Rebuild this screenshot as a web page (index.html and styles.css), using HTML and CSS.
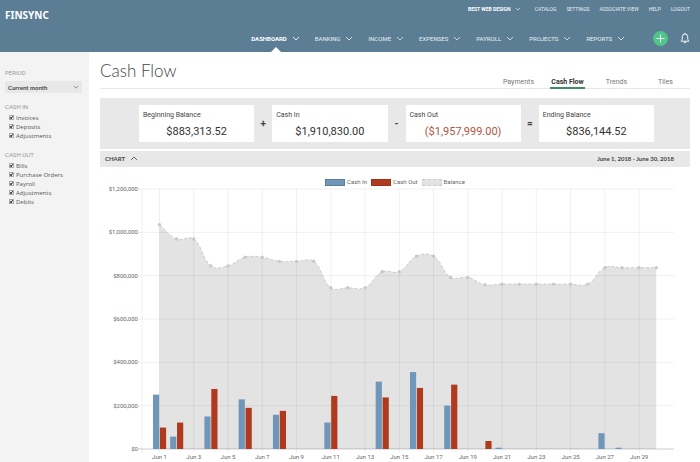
FILE: index.html
```html
<!DOCTYPE html>
<html lang="en">
<head>
    <meta charset="UTF-8">
    <meta name="viewport" content="width=device-width, initial-scale=1.0">
    <title>Cash Flow - FINSYNC</title>
    <link rel="stylesheet" href="styles.css">
</head>
<body>
    <header class="header">
        <a class="logo" href="#">FINSYNC</a>
        <div class="menus">
            <nav class="top-nav">
                <a class="company" href="#">BEST WEB DESIGN <svg class="chevron small" viewBox="0 0 8 5"><path d="M1 1l3 3 3-3"/></svg></a>
                <a href="#">CATALOG</a>
                <a href="#">SETTINGS</a>
                <a href="#">ASSOCIATE VIEW</a>
                <a href="#">HELP</a>
                <a href="#">LOGOUT</a>
            </nav>
            <nav class="main-nav">
                <a class="active" href="#">DASHBOARD <svg class="chevron" viewBox="0 0 8 5"><path d="M1 1l3 3 3-3"/></svg></a>
                <a href="#">BANKING <svg class="chevron" viewBox="0 0 8 5"><path d="M1 1l3 3 3-3"/></svg></a>
                <a href="#">INCOME <svg class="chevron" viewBox="0 0 8 5"><path d="M1 1l3 3 3-3"/></svg></a>
                <a href="#">EXPENSES <svg class="chevron" viewBox="0 0 8 5"><path d="M1 1l3 3 3-3"/></svg></a>
                <a href="#">PAYROLL <svg class="chevron" viewBox="0 0 8 5"><path d="M1 1l3 3 3-3"/></svg></a>
                <a href="#">PROJECTS <svg class="chevron" viewBox="0 0 8 5"><path d="M1 1l3 3 3-3"/></svg></a>
                <a href="#">REPORTS <svg class="chevron" viewBox="0 0 8 5"><path d="M1 1l3 3 3-3"/></svg></a>
                <button class="add-btn" aria-label="Add">
                    <svg viewBox="0 0 15 15"><path d="M7.5 3.5v8M3.5 7.5h8"/></svg>
                </button>
                <button class="bell-btn" aria-label="Notifications">
                    <svg viewBox="0 0 10 12"><path d="M1 9.200h8c-1-1-1.300-1.800-1.300-3.200V4.700a2.700 2.700 0 0 0-5.400 0V6c0 1.400-.3 2.200-1.300 3.200zM5 2V.8M3.900 9.500a1.100 1.300 0 0 0 2.200 0"/></svg>
                </button>
            </nav>
        </div>
    </header>

    <div class="page">
        <aside class="sidebar">
            <label class="group-title" for="period">PERIOD</label>
            <div class="select-box">
                <select id="period">
                    <option>Current month</option>
                </select>
                <svg class="chevron small" viewBox="0 0 8 5"><path d="M1 1l3 3 3-3"/></svg>
            </div>
            <fieldset>
                <legend class="group-title">CASH IN</legend>
                <label><input type="checkbox" checked> Invoices</label>
                <label><input type="checkbox" checked> Deposits</label>
                <label><input type="checkbox" checked> Adjustments</label>
            </fieldset>
            <fieldset>
                <legend class="group-title">CASH OUT</legend>
                <label><input type="checkbox" checked> Bills</label>
                <label><input type="checkbox" checked> Purchase Orders</label>
                <label><input type="checkbox" checked> Payroll</label>
                <label><input type="checkbox" checked> Adjustments</label>
                <label><input type="checkbox" checked> Debits</label>
            </fieldset>
        </aside>

        <main class="content">
            <div class="title-row">
                <h1>Cash Flow</h1>
                <nav class="tabs">
                    <a href="#">Payments</a>
                    <a class="active" href="#">Cash Flow</a>
                    <a href="#">Trends</a>
                    <a href="#">Tiles</a>
                </nav>
            </div>

            <section class="summary">
                <div class="card">
                    <h2>Beginning Balance</h2>
                    <p>$883,313.52</p>
                </div>
                <span class="operator">+</span>
                <div class="card">
                    <h2>Cash In</h2>
                    <p>$1,910,830.00</p>
                </div>
                <span class="operator">-</span>
                <div class="card">
                    <h2>Cash Out</h2>
                    <p class="negative">($1,957,999.00)</p>
                </div>
                <span class="operator">=</span>
                <div class="card">
                    <h2>Ending Balance</h2>
                    <p>$836,144.52</p>
                </div>
            </section>

            <div class="chart-bar">
                <button class="chart-toggle">CHART <svg class="chevron" viewBox="0 0 8 5"><path d="M1 4l3-3 3 3"/></svg></button>
                <span>June 1, 2018 - June 30, 2018</span>
            </div>

            <ul class="chart-legend">
                <li><span class="swatch in"></span>Cash In</li>
                <li><span class="swatch out"></span>Cash Out</li>
                <li><span class="swatch balance"></span>Balance</li>
            </ul>
            <svg id="chart" class="chart" viewBox="0 0 590 275"></svg>
        </main>
    </div>
    <script src="script.js"></script>
</body>
</html>
```
FILE: styles.css
```css
* {
    box-sizing: border-box;
}

body {
    margin: 0;
    min-height: 100vh;
    display: flex;
    flex-direction: column;
    font-family: Lato, "Open Sans", sans-serif;
    font-size: 6px;
    color: #444;
    background-color: #fff;
}

a {
    color: inherit;
    text-decoration: none;
}

button {
    padding: 0;
    border: none;
    background: none;
    font: inherit;
    color: inherit;
    cursor: pointer;
}

.chevron {
    width: 8px;
    height: 5px;
    fill: none;
    stroke: currentColor;
    stroke-width: 0.8;
}

.chevron.small {
    width: 6px;
    height: 4px;
}

/* header */
.header {
    display: flex;
    justify-content: space-between;
    height: 52px;
    padding: 0 10px 0 5px;
    background-color: #5c7e95;
    font-family: Roboto, sans-serif;
    color: #e8eef2;
}

.logo {
    padding-top: 8px;
    font: bold 10px/15px "Noto Sans", sans-serif;
    color: #fff;
}

.menus {
    display: flex;
    flex-direction: column;
    align-items: flex-end;
}

.top-nav {
    display: flex;
    align-items: center;
    gap: 10px;
    height: 17px;
    font-size: 5px;
}

.company {
    font-weight: bold;
    color: #fff;
    margin-right: 4px;
}

.company .chevron {
    margin-left: 3px;
}

.main-nav {
    display: flex;
    align-items: center;
    gap: 15px;
    height: 35px;
    padding-top: 7px;
}

.main-nav a {
    position: relative;
    display: flex;
    align-items: center;
    gap: 5px;
    height: 28px;
}

.main-nav .active {
    font-weight: bold;
    color: #fff;
}

.main-nav .active::after {
    content: "";
    position: absolute;
    left: 50%;
    bottom: 0;
    transform: translateX(-50%);
    border: 5px solid transparent;
    border-top: none;
    border-bottom-color: #fff;
}

.add-btn {
    width: 15px;
    height: 15px;
    margin: 0 -3px 0 13px;
    border-radius: 50%;
    background-color: #4fc58a;
}

.add-btn svg,
.bell-btn svg {
    display: block;
    width: 100%;
    fill: none;
    stroke: #fff;
    stroke-width: 0.9;
}

.bell-btn {
    width: 10px;
}

/* sidebar */
.page {
    flex: 1;
    display: flex;
}

.sidebar {
    width: 89px;
    padding: 17px 7px 0 5px;
    background-color: #f3f3f3;
    font-family: "Open Sans", sans-serif;
    color: #555;
}

.group-title {
    display: block;
    padding: 0;
    font-family: Roboto, sans-serif;
    line-height: 8px;
    color: #999;
}

.select-box {
    position: relative;
    margin: 4px 0 10px;
}

.select-box select {
    appearance: none;
    display: block;
    width: 100%;
    height: 12px;
    padding: 0 3px;
    border: none;
    background-color: #e8e8e8;
    font: bold 6px Lato, sans-serif;
    color: #444;
}

.select-box .chevron {
    position: absolute;
    right: 3px;
    top: 4px;
}

fieldset {
    margin: 0 0 11px;
    padding: 0;
    border: none;
}

fieldset .group-title {
    margin-bottom: 2px;
}

fieldset label {
    display: flex;
    align-items: center;
    gap: 2px;
    height: 9px;
    padding-left: 4px;
}

fieldset input {
    appearance: none;
    width: 5px;
    height: 5px;
    margin: 0;
    border: 1px solid #aaa;
    background-color: #fff;
}

fieldset input:checked::before {
    content: "";
    display: block;
    width: 3px;
    height: 3px;
    background-color: #111;
    clip-path: polygon(0 30%, 35% 55%, 75% 0, 100% 10%, 50% 100%, 0 80%);
}

/* content */
.content {
    flex: 1;
    padding: 0 10px 0 11px;
}

.title-row {
    display: flex;
    justify-content: space-between;
    align-items: flex-end;
    height: 37px;
    margin-bottom: 9px;
    border-bottom: 1px solid #e8e8e8;
}

h1 {
    margin: 0 0 7px;
    font-size: 17px;
    line-height: 20px;
    font-weight: 300;
}

.tabs {
    display: grid;
    grid-template-columns: repeat(4, 49px);
    justify-items: center;
    font: 7px/9px Roboto, sans-serif;
    color: #777;
}

.tabs a {
    margin-bottom: -1px;
    padding: 0 1px;
    border-bottom: 2px solid transparent;
}

.tabs .active {
    font-weight: bold;
    color: #333;
    border-color: #3c8c64;
}

.summary {
    display: grid;
    grid-template-columns: 1fr 18px 1fr 18px 1fr 18px 1fr;
    align-items: center;
    padding: 7px 36px 7px 39px;
    margin-bottom: 2px;
    background-color: #e8e8e8;
}

.card {
    height: 37px;
    padding: 5px 4px;
    background-color: #fff;
}

.card h2 {
    margin: 0;
    font: 7px/10px Roboto, sans-serif;
}

.card p {
    margin: 4px 0 0;
    font: 11px/15px Roboto, sans-serif;
    text-align: center;
    color: #333;
}

.card .negative {
    color: #b5533f;
}

.operator {
    font: bold 10px Roboto, sans-serif;
    text-align: center;
}

.chart-bar {
    display: flex;
    justify-content: space-between;
    align-items: center;
    height: 16px;
    padding: 0 16px 1px 5px;
    background-color: #e8e8e8;
    font-weight: bold;
}

.chart-toggle .chevron {
    margin-left: 4px;
}

.chart-legend {
    display: flex;
    justify-content: center;
    gap: 4px;
    margin: 11px 0 0;
    padding: 0;
    list-style: none;
    font-family: Roboto, sans-serif;
    line-height: 8px;
    color: #666;
}

.chart-legend li {
    display: flex;
    align-items: center;
    gap: 2px;
}

.swatch {
    width: 20px;
    height: 7px;
    border: 1px solid #5c7e95;
    background-color: #7096b9;
}

.swatch.out {
    border-color: #a03018;
    background-color: #b03a1e;
}

.swatch.balance {
    border: 1px dashed #ccc;
    background-color: #e3e3e3;
}

.chart {
    display: block;
    width: 100%;
}

.chart .grid {
    stroke: #000;
    stroke-opacity: 0.08;
    stroke-width: 0.8;
}

.chart .zero {
    stroke-opacity: 0.25;
}

.chart .area {
    fill: #e3e3e3;
}

.chart .line {
    fill: none;
    stroke: #ccc;
    stroke-dasharray: 3 2;
}

.chart .dot {
    fill: #c8c8c8;
}

.chart .bar-in {
    fill: #7096b9;
}

.chart .bar-out {
    fill: #b03a1e;
}

.chart text {
    font: 6px Roboto, sans-serif;
    fill: #666;
}
```
FILE: script.js
```javascript
const chart = document.getElementById('chart');

// balance at the end of each day of June
const balance = [
    1035000, 969000, 969000, 845000, 845000, 885000, 885000, 866000, 866000, 866000,
    744000, 744000, 744000, 818000, 818000, 890000, 890000, 792000, 792000, 758000,
    761000, 761000, 761000, 761000, 761000, 761000, 837000, 837000, 837000, 837000
];
const cashIn = { 1: 251000, 2: 57000, 4: 150000, 6: 229000, 8: 158000, 11: 122000, 14: 311000, 16: 355000, 18: 200000, 21: 6000, 27: 73000, 28: 6000 };
const cashOut = { 1: 99000, 2: 122000, 4: 277000, 6: 190000, 8: 176000, 11: 245000, 14: 238000, 16: 282000, 18: 297000, 20: 37000 };

const left = 42;
const right = 574;
const bottom = 263;
const top0 = 3;
const dayX = (day) => 59.5 + (day - 1) * 17.13;
const valueY = (value) => bottom - value / 1200000 * (bottom - top0);

const add = (name, attrs, text) => {
    const el = document.createElementNS('http://www.w3.org/2000/svg', name);
    for (const key in attrs) el.setAttribute(key, attrs[key]);
    if (text) el.textContent = text;
    chart.appendChild(el);
};

// smooth curve, tension 0.4
const points = balance.map((value, i) => ({ x: dayX(i + 1), y: valueY(value) }));
const controls = points.map((p, i) => {
    const prev = points[i - 1] || p;
    const next = points[i + 1] || p;
    const d01 = Math.hypot(p.x - prev.x, p.y - prev.y);
    const d12 = Math.hypot(next.x - p.x, next.y - p.y);
    const fa = 0.4 * d01 / (d01 + d12);
    const fb = 0.4 * d12 / (d01 + d12);
    return {
        before: [p.x - fa * (next.x - prev.x), p.y - fa * (next.y - prev.y)],
        after: [p.x + fb * (next.x - prev.x), p.y + fb * (next.y - prev.y)]
    };
});
let curve = `M${points[0].x} ${points[0].y}`;
for (let i = 1; i < points.length; i++) {
    curve += `C${controls[i - 1].after} ${controls[i].before} ${points[i].x} ${points[i].y}`;
}

add('path', { class: 'area', d: `${curve}V${bottom}H${points[0].x}Z` });

// grid and labels
for (let value = 0; value <= 1200000; value += 200000) {
    const y = valueY(value);
    add('line', { class: value ? 'grid' : 'grid zero', x1: left - 4, x2: right, y1: y, y2: y });
    add('text', { x: left - 4, y: y + 2, 'text-anchor': 'end' }, '$' + value.toLocaleString('en-US'));
}
add('line', { class: 'grid', x1: left, x2: left, y1: top0, y2: bottom + 4 });
for (let day = 1; day <= 29; day += 2) {
    add('line', { class: 'grid', x1: dayX(day), x2: dayX(day), y1: top0, y2: bottom + 4 });
    add('text', { x: dayX(day), y: bottom + 10, 'text-anchor': 'middle' }, 'Jun ' + day);
}

add('path', { class: 'line', d: curve });
points.forEach(p => add('circle', { class: 'dot', cx: p.x, cy: p.y, r: 1.7 }));

for (const day in cashIn) {
    const y = valueY(cashIn[day]);
    add('rect', { class: 'bar-in', x: dayX(day) - 6.5, y: y, width: 6.2, height: bottom - y });
}
for (const day in cashOut) {
    const y = valueY(cashOut[day]);
    add('rect', { class: 'bar-out', x: dayX(day) + 0.4, y: y, width: 6.2, height: bottom - y });
}
```
